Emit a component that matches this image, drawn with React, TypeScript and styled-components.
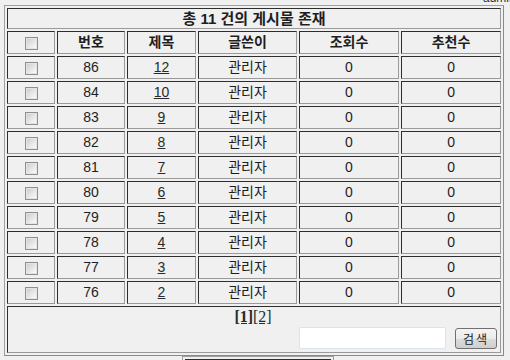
import styled, { createGlobalStyle } from 'styled-components';

const GlobalStyle = createGlobalStyle`
    html, body {
        margin: 0;
        padding: 0;
        overflow: hidden;
        background: #f0f0f0;
    }
    body {
        font-family: "Liberation Sans", "Noto Sans CJK KR", sans-serif;
        font-size: 14px;
        color: #1e1e1e;
    }
`;

const Page = styled.div`
    width: 510px;
    height: 360px;
    padding-left: 4px;
    box-sizing: border-box;
    overflow: hidden;
`;

const TopBar = styled.div`
    height: 5px;
    padding-left: 479px;
    display: flex;
    align-items: flex-end;
    white-space: nowrap;
`;

const UserName = styled.span`
    font-size: 12px;
    line-height: 12px;
    margin-bottom: 1px;
    color: #333;
`;

const Board = styled.table`
    width: 500px;
    table-layout: fixed;
    border-collapse: separate;
    border-spacing: 2px;
    border: 1px solid #a0a0a0;
    border-right-color: #8a8a8a;
    border-bottom-color: #8a8a8a;
`;

const Col = styled.col<{ $w: number }>`
    width: ${(p) => p.$w}px;
`;

const Cell = styled.td`
    box-sizing: border-box;
    height: 23px;
    padding: 1px;
    line-height: 19px;
    text-align: center;
    vertical-align: middle;
    border: 1px solid #2e2e2e;
    border-right-color: #9a9a9a;
    border-bottom-color: #9a9a9a;
`;

const HeadCell = styled(Cell).attrs({ as: 'th' })`
    font-weight: bold;
    font-size: 14px;
`;

const TitleCell = styled(Cell)`
    height: 21px;
    line-height: 17px;
    font-weight: bold;
    font-size: 15px;
`;

const FooterCell = styled(Cell)`
    height: 47px;
    padding: 1px 3px 2px 1px;
    vertical-align: top;
`;

const Check = styled.input.attrs({ type: 'checkbox' })`
    appearance: none;
    margin: 0;
    width: 13px;
    height: 13px;
    vertical-align: middle;
    border: 1px solid #8f8f8f;
    background: linear-gradient(135deg, #c8c8c8 0%, #e8e8e8 55%, #ffffff 100%);
    box-shadow: inset 0 0 0 1px #e4e4e4;
`;

const PostLink = styled.a`
    color: #2a2a2a;
    text-decoration: underline;
`;

const PageLink = styled.a<{ $current?: boolean }>`
    color: #2a2a2a;
    text-decoration: underline;
    font-weight: ${(p) => (p.$current ? 'bold' : 'normal')};
    font-family: "Liberation Serif", serif;
    font-size: 16px;
`;

const Pager = styled.div`
    line-height: 17px;
    text-align: center;
`;

const SearchRow = styled.div`
    display: flex;
    justify-content: flex-end;
    align-items: center;
    gap: 9px;
    margin-top: 1px;
`;

const SearchInput = styled.input`
    box-sizing: border-box;
    width: 147px;
    height: 22px;
    border: 1px solid #dde3ea;
    border-radius: 2px;
    background: #fff;
    outline: none;
`;

const SearchButton = styled.button`
    box-sizing: border-box;
    width: 42px;
    height: 21px;
    padding: 0;
    border: 1px solid #707070;
    border-radius: 3px;
    background: linear-gradient(#f4f4f4 0%, #ebebeb 50%, #dcdcdc 51%, #cfcfcf 100%);
    font-family: "Noto Sans CJK KR", sans-serif;
    font-size: 12px;
    color: #222;
    letter-spacing: 2px;
`;

const BottomBox = styled.div`
    margin-left: 178px;
    width: 146px;
    height: 10px;
    padding: 2px 2px 0 2px;
    border-top: 1px solid #a0a0a0;
    border-left: 1px solid #a0a0a0;
    border-right: 1px solid #a0a0a0;
`;

const BottomInner = styled.div`
    height: 10px;
    border-top: 1px solid #2e2e2e;
    border-left: 1px solid #2e2e2e;
`;

const posts = [
    { no: 86, title: 12 },
    { no: 84, title: 10 },
    { no: 83, title: 9 },
    { no: 82, title: 8 },
    { no: 81, title: 7 },
    { no: 80, title: 6 },
    { no: 79, title: 5 },
    { no: 78, title: 4 },
    { no: 77, title: 3 },
    { no: 76, title: 2 },
];

const App = () => {
    return (
        <Page>
            <GlobalStyle />
            <TopBar>
                <UserName>admin</UserName>
            </TopBar>
            <Board>
                <colgroup>
                    <Col $w={48} />
                    <Col $w={68} />
                    <Col $w={69} />
                    <Col $w={99} />
                    <Col $w={100} />
                    <Col $w={100} />
                </colgroup>
                <tbody>
                    <tr>
                        <TitleCell colSpan={6}>총 11 건의 게시물 존재</TitleCell>
                    </tr>
                    <tr>
                        <HeadCell><Check /></HeadCell>
                        <HeadCell>번호</HeadCell>
                        <HeadCell>제목</HeadCell>
                        <HeadCell>글쓴이</HeadCell>
                        <HeadCell>조회수</HeadCell>
                        <HeadCell>추천수</HeadCell>
                    </tr>
                    {posts.map((p) => (
                        <tr key={p.no}>
                            <Cell><Check /></Cell>
                            <Cell>{p.no}</Cell>
                            <Cell><PostLink href="#">{p.title}</PostLink></Cell>
                            <Cell>관리자</Cell>
                            <Cell>0</Cell>
                            <Cell>0</Cell>
                        </tr>
                    ))}
                    <tr>
                        <FooterCell colSpan={6}>
                            <Pager>
                                <PageLink href="#" $current>[1]</PageLink>
                                <PageLink href="#">[2]</PageLink>
                            </Pager>
                            <SearchRow>
                                <SearchInput />
                                <SearchButton>검색</SearchButton>
                            </SearchRow>
                        </FooterCell>
                    </tr>
                </tbody>
            </Board>
            <BottomBox>
                <BottomInner />
            </BottomBox>
        </Page>
    );
};

export default App;
